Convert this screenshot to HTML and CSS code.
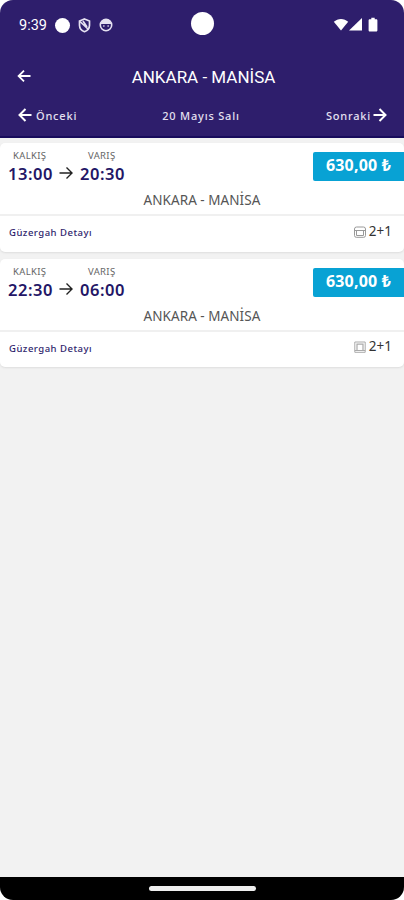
FILE: index.html
```html
<!DOCTYPE html>
<html lang="tr">
<head>
<meta charset="utf-8">
<title>Ankara - Manisa</title>
<link rel="stylesheet" href="styles.css">
</head>
<body>
<div class="phone">
  <header class="header">
    <div class="status">
      <span class="clock">9:39</span>
      <span class="dot"></span>
      <svg class="shield" width="13" height="15" viewBox="0 0 13 15" fill="none" stroke="#e4e0f0" stroke-width="1.700"><path d="M6.500 1 11.500 3v4.300c0 3.200-2 5.300-5 6.400-3-1.100-5-3.200-5-6.400V3z"/><path d="M2 3.500 10.500 11.500M5 3l4 6"/></svg>
      <svg class="face" width="14" height="14" viewBox="0 0 14 14" fill="none" stroke="#e4e0f0" stroke-width="1.600"><circle cx="7" cy="7" r="5.700"/><path d="M1.500 6h11L11 2.500 7 1 3 2.500z" fill="#e4e0f0" stroke="none"/><path d="M4.200 8h1.300M8.500 8h1.300"/></svg>
      <span class="camera"></span>
      <svg class="signals" width="46" height="16" viewBox="0 0 46 16" fill="#fff"><path d="M.8 4.800C4.700.900 11.300.900 15.200 4.800L8 13.500z"/><path d="M29 1v12.500H16z"/><path d="M36.800 2.200h1.500V.800h3.400v1.400h1.500c.800 0 1.200.4 1.200 1.200v9.800c0 .9-.5 1.300-1.300 1.300h-6.200c-.8 0-1.300-.4-1.300-1.300V3.400c0-.8.4-1.200 1.200-1.200z"/></svg>
    </div>
    <div class="titlebar">
      <svg class="back" width="14" height="12" viewBox="0 0 14 12" fill="none" stroke="#fff" stroke-width="1.800"><path d="M13.500 6H1.500M7 .7 1.600 6 7 11.300"/></svg>
      <h1>ANKARA - MANİSA</h1>
    </div>
    <nav class="days">
      <span class="prev"><svg width="14" height="14" viewBox="0 0 14 14" fill="none" stroke="#fff" stroke-width="2"><path d="M13.500 7H1.500M7.500 1 1.500 7l6 6"/></svg>Önceki</span>
      <span class="date">20 Mayıs Salı</span>
      <span class="next">Sonraki<svg width="14" height="14" viewBox="0 0 14 14" fill="none" stroke="#fff" stroke-width="2"><path d="M.5 7h12M6.500 1l6 6-6 6"/></svg></span>
    </nav>
  </header>
  <main class="list">
    <article class="card">
      <div class="trip">
        <div class="times">
          <div class="stop"><small>KALKIŞ</small><b>13:00</b></div>
          <svg class="arrow" width="14" height="14" viewBox="0 0 14 14" fill="none" stroke="#222" stroke-width="1.400"><path d="M.5 7h12M7.500 1.500 13 7l-5.500 5.500"/></svg>
          <div class="stop arrival"><small>VARIŞ</small><b>20:30</b></div>
        </div>
        <div class="price">630,00 ₺</div>
        <div class="route">ANKARA - MANİSA</div>
      </div>
      <div class="foot">
        <span class="detail">Güzergah Detayı</span>
        <span class="seats"><svg width="12" height="12" viewBox="0 0 12 12" fill="none" stroke="#999"><path d="M2.500 1h7q2 0 2 2v6.500q0 1.800-1.800 1.800H2.300Q.5 11.300.5 9.500V3q0-2 2-2zM.5 4.500h11M2.500 4.500v5h7v-5"/></svg>2+1</span>
      </div>
    </article>
    <article class="card">
      <div class="trip">
        <div class="times">
          <div class="stop"><small>KALKIŞ</small><b>22:30</b></div>
          <svg class="arrow" width="14" height="14" viewBox="0 0 14 14" fill="none" stroke="#222" stroke-width="1.400"><path d="M.5 7h12M7.500 1.500 13 7l-5.500 5.500"/></svg>
          <div class="stop arrival"><small>VARIŞ</small><b>06:00</b></div>
        </div>
        <div class="price">630,00 ₺</div>
        <div class="route">ANKARA - MANİSA</div>
      </div>
      <div class="foot">
        <span class="detail">Güzergah Detayı</span>
        <span class="seats"><svg width="12" height="12" viewBox="0 0 12 12" fill="none" stroke="#aaa"><path d="M.8 1h10.400v10.300H.8z"/><path d="M3 9V3.200h6V9" stroke-width="1.200"/><path d="M.8 9.500h10.400"/></svg>2+1</span>
      </div>
    </article>
  </main>
  <footer class="gesture"><span></span></footer>
</div>
</body>
</html>
```
FILE: styles.css
```css
* { box-sizing: border-box; }
body { margin: 0; background: #fff; font-family: "Noto Sans", sans-serif; }
svg { display: block; flex: none; }
.phone {
  width: 404px; height: 900px; border-radius: 13px; overflow: hidden;
  display: flex; flex-direction: column; background: #f2f2f2;
}
.header {
  height: 138px; background: #2e1e6c; border-bottom: 2px solid #180c5c;
  color: #fff; flex: none;
}
.status { height: 48px; padding: 2px 25px 0 19px; display: flex; align-items: center; }
.clock { font: 400 14.5px Roboto, sans-serif; width: 28px; white-space: nowrap; }
.dot { width: 15px; height: 15px; border-radius: 50%; background: #fff; margin-left: 8px; }
.shield { margin-left: 8px; }
.face { margin-left: 8px; }
.camera { width: 23px; height: 23px; border-radius: 50%; background: #fff; margin: -3px 0 0 78px; }
.signals { margin-left: auto; }
.titlebar {
  height: 56px; display: grid; grid-template-columns: 40px 1fr 40px;
  align-items: center; padding: 0 0 0 17px;
}
h1 { margin: 1px 14px 0 0; font: 400 17px Roboto, sans-serif; text-align: center; white-space: nowrap; }
.days {
  height: 22px; padding: 0 17px 0 18px; display: grid; grid-template-columns: 1fr auto 1fr;
  align-items: center; font-size: 11px; font-weight: 500; letter-spacing: .8px; color: #e4e0f0;
}
.date { margin-right: 3px; }
.prev, .next { display: flex; align-items: center; gap: 4px; }
.days svg { margin-top: -1px; }
.next { justify-content: flex-end; gap: 2px; }
.list { flex: 1; padding-top: 5px; display: flex; flex-direction: column; gap: 7px; }
.card { height: 108.500px; flex: none; background: #fff; border-radius: 5px; box-shadow: 0 1px 2px #ddd; }
.trip {
  height: 73px; border-bottom: 2px solid #f0f0f0; display: grid;
  grid-template-columns: auto auto; grid-template-rows: 48px 1fr; justify-content: space-between;
}
.times { display: flex; padding: 7px 0 0 8px; }
.stop { width: 46px; }
.stop small { display: block; font-size: 9.500px; line-height: 11px; color: #666; padding-left: 5px; letter-spacing: .35px; }
.arrival small { padding-left: 8px; }
.stop b { display: block; font-size: 16.500px; line-height: 26px; font-weight: 600; letter-spacing: .55px; color: #241666; }
.arrow { margin: 16px 7px 0 5px; }
.price {
  width: 91px; height: 29px; margin-top: 9px; background: #08a2d4; border-radius: 2px 0 0 2px;
  color: #fff; font-size: 16px; font-weight: 700; line-height: 26px; text-align: center; white-space: nowrap; letter-spacing: .2px;
}
.route { grid-column: 1 / 3; text-align: center; font-size: 13.500px; line-height: 19px; color: #555; letter-spacing: .05px; }
.foot { height: 35px; padding: 0 12px 0 9px; display: flex; align-items: center; justify-content: space-between; }
.detail { font-size: 9.500px; font-weight: 500; letter-spacing: .5px; color: #2e1e6c; margin-top: -2px; }
.seats { display: flex; align-items: center; gap: 3px; font-size: 13.500px; color: #333; margin-top: -6px; }
.seats svg { margin-top: 2px; }
.gesture { height: 23px; background: #000; display: flex; justify-content: center; align-items: center; flex: none; }
.gesture span { width: 107px; height: 5px; border-radius: 3px; background: #eee; }
```
